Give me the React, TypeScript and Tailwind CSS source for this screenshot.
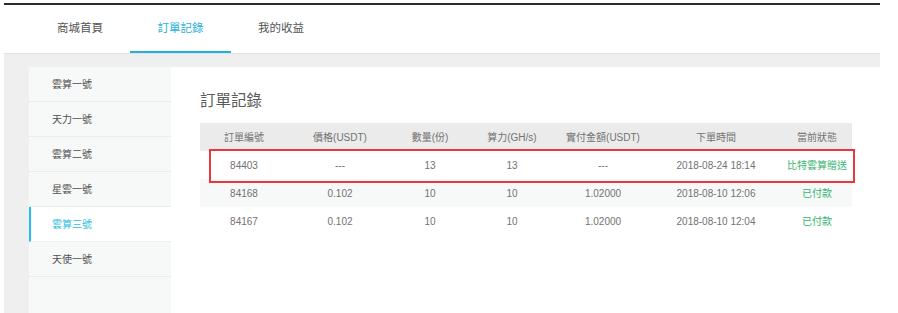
const font = { fontFamily: '"Liberation Sans", "Noto Sans CJK TC", sans-serif' };

const tabs = [
  { label: '商城首頁', active: false },
  { label: '訂單記錄', active: true },
  { label: '我的收益', active: false },
];

const machines = ['雲算一號', '天力一號', '雲算二號', '星雲一號', '雲算三號', '天使一號'];
const activeMachine = '雲算三號';

const headers = ['訂單編號', '價格(USDT)', '數量(份)', '算力(GH/s)', '實付金額(USDT)', '下單時間', '當前狀態'];

const orders = [
  { id: '84403', price: '---', qty: '13', power: '13', paid: '---', time: '2018-08-24 18:14', status: '比特雲算贈送' },
  { id: '84168', price: '0.102', qty: '10', power: '10', paid: '1.02000', time: '2018-08-10 12:06', status: '已付款' },
  { id: '84167', price: '0.102', qty: '10', power: '10', paid: '1.02000', time: '2018-08-10 12:04', status: '已付款' },
];

const cols = 'grid grid-cols-[88px_104px_76px_88px_94px_132px_70px]';

export default function App() {
  return (
    <div className="h-[313px] w-[898px] overflow-hidden bg-white pl-[4px] pt-[3px]" style={font}>
      <div className="flex h-[310px] w-[876px] flex-col">
        <div className="h-[2px] bg-[#2b2b2b]" />

        <div className="flex h-[48px] pl-[26px]">
          {tabs.map((t) => (
            <div
              key={t.label}
              className={
                t.active
                  ? 'flex w-[101px] items-center justify-center border-b-2 border-[#1fb3da] pt-[2px] text-[11.5px] text-[#27b2d8]'
                  : 'flex w-[100px] items-center justify-center border-b-2 border-transparent pt-[2px] text-[11.5px] text-[#555]'
              }
            >
              {t.label}
            </div>
          ))}
        </div>

        <div className="flex flex-1 border-t border-[#e2e2e2] bg-[#efefef] pl-[25px] pt-[13px]">
          <div className="w-[142px] bg-[#f7f8f8]">
            {machines.map((m) => (
              <div
                key={m}
                className={
                  m === activeMachine
                    ? 'flex h-[35px] items-center border-b border-l-2 border-b-[#f0f0f0] border-l-[#1fc0e6] bg-white pl-[21px] text-[10px] text-[#2bbde0]'
                    : 'flex h-[35px] items-center border-b border-[#ebebeb] pl-[23px] text-[10px] text-[#505050]'
                }
              >
                {m}
              </div>
            ))}
          </div>

          <div className="flex-1 bg-white pl-[29px] pt-[23px]">
            <h1 className="text-[15.5px] leading-[22px] text-[#5a5a5a]">訂單記錄</h1>

            <div className="relative mt-[11px] w-[652px] text-[10px] text-[#727272]">
              <div className={`${cols} h-[28px] items-center bg-[#ebebeb] text-center`}>
                {headers.map((h) => (
                  <div key={h}>{h}</div>
                ))}
              </div>
              {orders.map((o, i) => (
                <div
                  key={o.id}
                  className={`${cols} h-[28px] items-center text-center ${i === 1 ? 'bg-[#f7f9f9]' : 'bg-white'}`}
                >
                  <div>{o.id}</div>
                  <div>{o.price}</div>
                  <div>{o.qty}</div>
                  <div>{o.power}</div>
                  <div>{o.paid}</div>
                  <div>{o.time}</div>
                  <div className="text-[#35b46e]">{o.status}</div>
                </div>
              ))}

              <div className="absolute left-[9px] top-[26px] h-[34px] w-[646px] border-2 border-[#e8383d]" />
            </div>
          </div>
        </div>
      </div>
    </div>
  );
}
